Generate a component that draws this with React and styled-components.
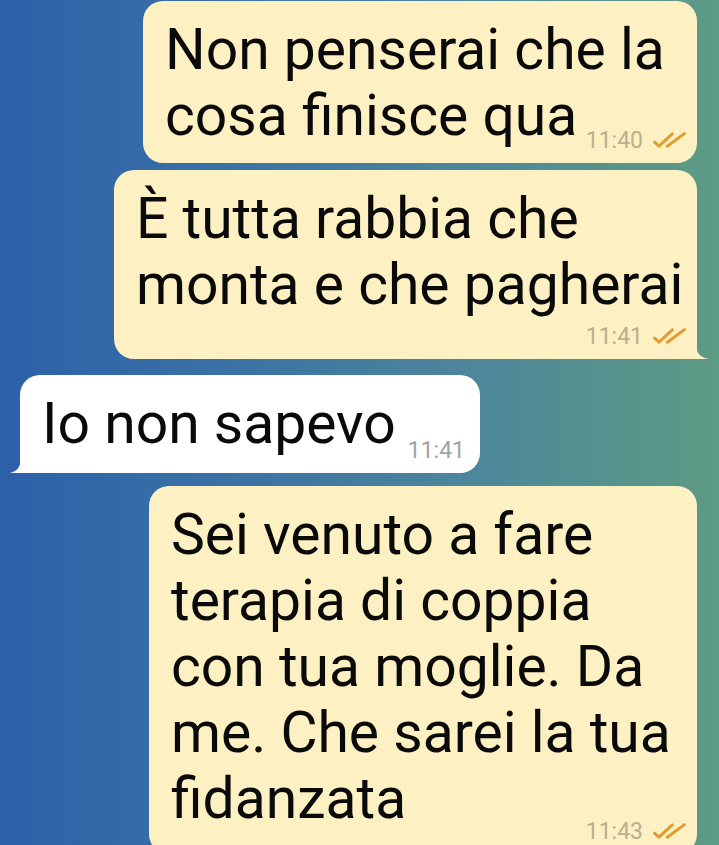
import React from 'react';
import styled, { createGlobalStyle } from 'styled-components';

const GlobalStyle = createGlobalStyle`
  html, body {
    margin: 0;
    padding: 0;
  }
  body {
    font-family: Roboto, "Noto Sans", sans-serif;
  }
`;

const Screen = styled.div`
  width: 719px;
  height: 845px;
  overflow: hidden;
  padding-top: 1px;
  box-sizing: border-box;
  background: linear-gradient(to right, #2c61a9 0%, #3a70a5 30%, #4d869b 65%, #5e9b84 100%);
`;

const Row = styled.div`
  display: flex;
  justify-content: ${p => (p.$out ? 'flex-end' : 'flex-start')};
  padding: ${p => (p.$out ? '0 22px 0 0' : '0 0 0 20px')};
  margin-top: ${p => p.$gap}px;
`;

const Bubble = styled.div`
  position: relative;
  box-sizing: border-box;
  width: ${p => p.$w}px;
  padding: 16px ${p => (p.$out ? 6 : 15)}px 11.4px 22px;
  background: ${p => (p.$out ? '#fdf0c2' : '#ffffff')};
  border-radius: 20px;
  ${p => p.$tail && (p.$out ? 'border-bottom-right-radius: 0;' : 'border-bottom-left-radius: 0;')}
`;

const Text = styled.div`
  display: flow-root;
  font-size: 57px;
  line-height: 66px;
  color: #0a0a0a;
`;

const Meta = styled.span`
  float: right;
  display: flex;
  align-items: center;
  gap: 10px;
  height: 23px;
  margin: ${p => p.$shift}px ${p => (p.$out ? 5 : 0)}px 0 8px;
  font-size: 23px;
  line-height: 23px;
  color: ${p => (p.$out ? '#bdae8d' : '#9ea49d')};
`;

const Tail = styled.svg`
  position: absolute;
  bottom: 0;
  ${p => (p.$out ? 'right: -12px;' : 'left: -10px;')}
`;

const Checks = () => (
  <svg width="33" height="16" viewBox="0 0 33 16" fill="none">
    <path d="M1.6 10.2 L6 14.2 L19.3 1.8" stroke="#e39c32" strokeWidth="3" strokeLinecap="round" strokeLinejoin="round" />
    <path d="M14.3 14.2 L31.4 1.6" stroke="#e39c32" strokeWidth="3" strokeLinecap="round" />
  </svg>
);

const messages = [
  { out: true, gap: 0, w: 554, time: '11:40', shift: 45.6, text: 'Non penserai che la cosa finisce qua' },
  { out: true, gap: 7, w: 583, time: '11:41', shift: 7, tail: true, text: 'È tutta rabbia che monta e che pagherai' },
  { out: false, gap: 16, w: 460, time: '11:41', shift: 47.6, tail: true, text: 'Io non sapevo' },
  { out: true, gap: 13, w: 548, time: '11:43', shift: 53.6, text: 'Sei venuto a fare terapia di coppia con tua moglie. Da me. Che sarei la tua fidanzata' },
];

const Message = ({ m }) => (
  <Row $out={m.out} $gap={m.gap}>
    <Bubble $out={m.out} $w={m.w} $tail={m.tail}>
      <Text>
        {m.text}
        <Meta $out={m.out} $shift={m.shift}>
          <span>{m.time}</span>
          {m.out && <Checks />}
        </Meta>
      </Text>
      {m.tail && (
        m.out ? (
          <Tail $out width="13" height="14" viewBox="0 0 13 14">
            <path d="M0 0 C0.5 8 4 12.5 13 14 L0 14 Z" fill="#fdf0c2" />
          </Tail>
        ) : (
          <Tail width="11" height="14" viewBox="0 0 11 14">
            <path d="M11 0 C10.5 8 7 12.5 0 14 L11 14 Z" fill="#ffffff" />
          </Tail>
        )
      )}
    </Bubble>
  </Row>
);

export default function App() {
  return (
    <>
      <GlobalStyle />
      <Screen>
        {messages.map((m, i) => (
          <Message key={i} m={m} />
        ))}
      </Screen>
    </>
  );
}
